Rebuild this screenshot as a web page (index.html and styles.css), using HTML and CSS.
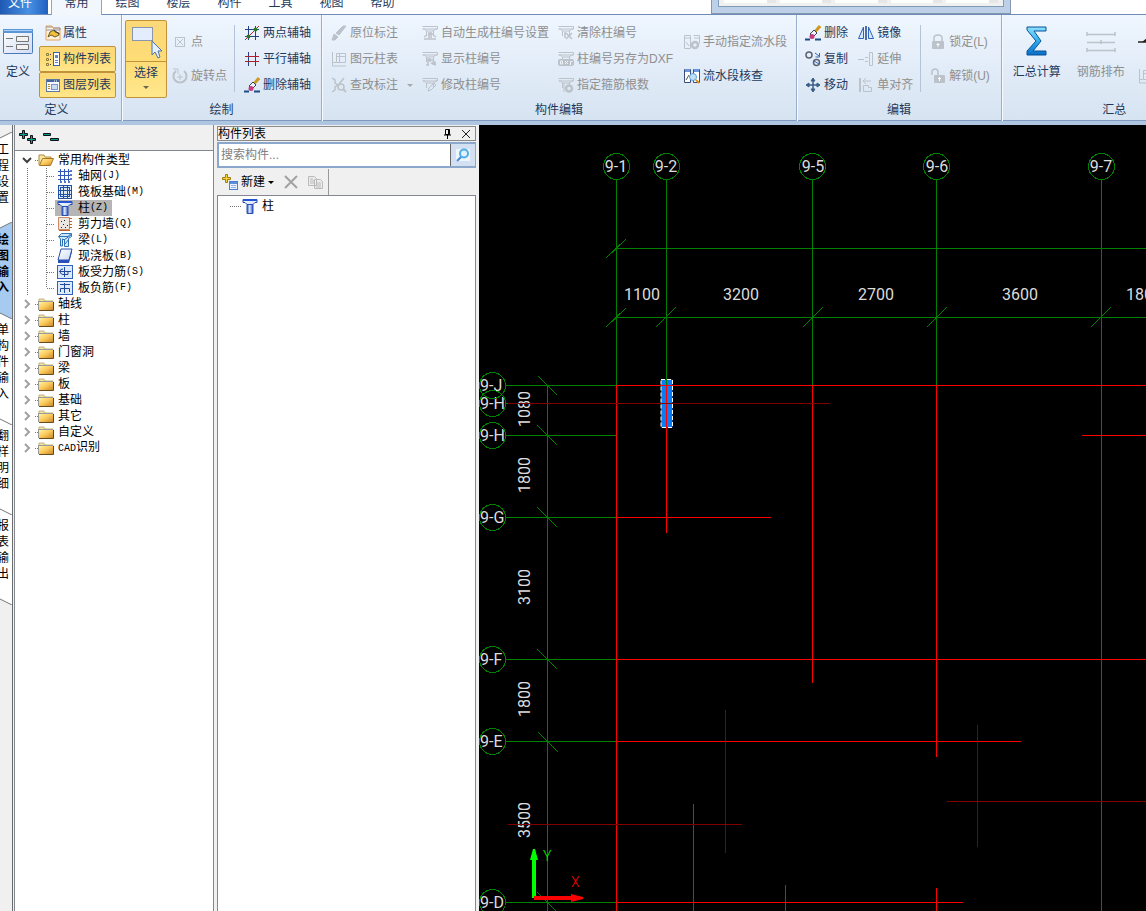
FILE: index.html
```html
<!DOCTYPE html>
<html lang="zh-CN">
<head>
<meta charset="utf-8">
<title>绘图输入</title>
<link rel="stylesheet" href="styles.css">
</head>
<body>
<svg class="sprite" aria-hidden="true">
  <defs>
    <linearGradient id="gold" x1="0" y1="0" x2="1" y2="1"><stop offset="0" stop-color="#fff6a8"/><stop offset=".5" stop-color="#fbc95c"/><stop offset="1" stop-color="#c98a2b"/></linearGradient>
    <linearGradient id="blue" x1="0" y1="0" x2="1" y2="0"><stop offset="0" stop-color="#2850c0"/><stop offset=".45" stop-color="#dcebff"/><stop offset="1" stop-color="#2850c0"/></linearGradient>
    <linearGradient id="sigma" x1="0" y1="0" x2="0" y2="1"><stop offset="0" stop-color="#8fe0fb"/><stop offset=".5" stop-color="#2fb0ee"/><stop offset="1" stop-color="#0a6cc4"/></linearGradient>
    <linearGradient id="pane" x1="0" y1="0" x2="1" y2="1"><stop offset="0" stop-color="#ffffff"/><stop offset="1" stop-color="#cfdcf4"/></linearGradient>
  </defs>
  <symbol id="folder" viewBox="0 0 16 14"><path d="M1 3V2h5l1 2h8v9H1z" fill="#efe3a0" stroke="#c8b478"/><path d="M1 4.500h14v8.500H1z" fill="url(#gold)"/><path d="M1 4.500h14M.5 4v9" stroke="#9a9a9a"/><path d="M15.500 5v8.500H1" fill="none" stroke="#6b4a17"/></symbol>
  <symbol id="folder-open" viewBox="0 0 16 14"><path d="M1 12V2h5l1 2h6v3" fill="#f4e9a0" stroke="#b08a3c"/><path d="M1.500 12.500l3-7h11l-3 7z" fill="url(#gold)" stroke="#a87424"/></symbol>
  <symbol id="props" viewBox="0 0 16 16"><path d="M1 4V1h6l1 2h7v12H1z" fill="#fdf0dc" stroke="#eba25c"/><path d="M1 2h6M8 3h7v2H1" fill="none" stroke="#8c97a8"/><path d="M3 12l2-5 4-2 1 2 4 1v2l-4 2-4-2z" fill="#f0c23c" stroke="#6b5824"/><path d="M9 5l5 4" stroke="#333"/></symbol>
  <symbol id="partlist" viewBox="0 0 16 16"><path d="M1.500 2.500h2v2h-2zM1.500 7.500h2v2h-2zM1.500 12.500h2v2h-2z" fill="none" stroke="#8b7a3a"/><path d="M5 3.500h2M5 8.500h2M5 13.500h2" stroke="#444" stroke-dasharray="1 1"/><rect x="8.500" y="1.500" width="6" height="13" fill="#fff" stroke="#3b62a8"/><path d="M10 4h3v3h-3z" fill="#5b86c8"/><path d="M10 9.500h3M10 11.500h3" stroke="#5b86c8"/></symbol>
  <symbol id="layers" viewBox="0 0 16 16"><rect x="1.500" y="2.500" width="13" height="12" fill="#f5f8ff" stroke="#5b7aa8"/><path d="M2 3h12v2H2z" fill="#44659c"/><path d="M9 4h1M11 4h1" stroke="#fff"/><path d="M3 7.500h2M3 9.500h2M3 11.500h2" stroke="#c08a1a"/><rect x="6.500" y="7.500" width="6" height="5" fill="#cfdcf4" stroke="#7d98c4"/></symbol>
  <symbol id="pt" viewBox="0 0 16 16"><rect x="3.500" y="3.500" width="9" height="9" fill="none" stroke="currentColor"/><path d="M5 5l6 6M11 5l-6 6" stroke="currentColor"/></symbol>
  <symbol id="rotpt" viewBox="0 0 16 16"><path d="M4 3a6.500 6.500 0 1 0 8 0" fill="none" stroke="currentColor" stroke-width="2"/><path d="M1 1h5v5M8 6v6M5 9h6" fill="none" stroke="currentColor"/></symbol>
  <symbol id="twopt" viewBox="0 0 16 16"><path d="M4.500 1v14M11.500 1v14M1 4.500h14M1 11.500h14" stroke="#27408b"/><path d="M1 15L15 1" stroke="#c8202c"/><circle cx="4.500" cy="11.500" r="2" fill="#2c7a20"/><circle cx="11.500" cy="4.500" r="2" fill="#2c7a20"/></symbol>
  <symbol id="parallel" viewBox="0 0 16 16"><path d="M4.500 1v14M11.500 1v14" stroke="#27408b"/><path d="M1 5.500h14M1 10.500h14" stroke="#b0202c"/></symbol>
  <symbol id="brush" viewBox="0 0 16 16"><path d="M15 1L9 8" stroke="#d09a20" stroke-width="3"/><path d="M9 5l3 3-4 4-3-3z" fill="#eef3ff" stroke="#345"/><circle cx="7" cy="11.500" r="2.500" fill="#c83c80"/><path d="M0 14.500h5M10 14.500h6" stroke="#1c4b85" stroke-width="2"/></symbol>
  <symbol id="feather" viewBox="0 0 16 16"><path d="M15 1l-7 9-3-2 7-7zM1 15l2-6 4 3-3 3z" fill="currentColor" stroke="currentColor"/></symbol>
  <symbol id="tbl" viewBox="0 0 16 16"><path d="M1.500 1v14H15M5.500 2.500h9v9h-9zM6 5.500h8M8.500 3v8M1 11.500h4" fill="none" stroke="currentColor"/></symbol>
  <symbol id="check" viewBox="0 0 16 16"><path d="M1 1l3 2v3l3 2-3 2v3l-3 2M13 1L8 7" fill="none" stroke="currentColor" stroke-width="1.500"/><circle cx="10" cy="10" r="3" fill="none" stroke="currentColor" stroke-width="1.500"/><path d="M12 12l3 3" stroke="currentColor" stroke-width="2"/></symbol>
  <symbol id="colbase" viewBox="0 0 16 16"><path d="M.5 1.500h15v2.500h-2l-2 2v4M.5 4h2l2 2v5M1 4h14M5 6h7" fill="none" stroke="currentColor"/></symbol>
  <symbol id="col1" viewBox="0 0 16 16"><use href="#colbase"/><path d="M7 7v6M9 7v6M6 9h5M2 14h12M2 12l3-2M14 12l-3-2" stroke="currentColor" stroke-width="1.500"/></symbol>
  <symbol id="col2" viewBox="0 0 16 16"><use href="#colbase"/><path d="M6 7v7M8 7v4M6 9h5M9 12l5 2M4 14h3" stroke="currentColor" stroke-width="1.500"/><circle cx="12" cy="12" r="2" fill="currentColor"/></symbol>
  <symbol id="col3" viewBox="0 0 16 16"><use href="#colbase"/><path d="M6 14l1-3 5-5 2 2-5 5z" fill="none" stroke="currentColor"/></symbol>
  <symbol id="colx" viewBox="0 0 16 16"><use href="#colbase"/><path d="M7 7v6M8 8l6 6M14 8l-6 6" stroke="currentColor" stroke-width="1.500"/></symbol>
  <symbol id="coldxf" viewBox="0 0 16 16"><use href="#colbase"/><rect x="0" y="8" width="16" height="7" rx="2" fill="currentColor"/><path d="M2.500 10h2v3h-2zM7 10l3 3M10 10l-3 3M12.500 14v-3.500h2" stroke="#eef3f9" fill="none"/></symbol>
  <symbol id="colgear" viewBox="0 0 16 16"><use href="#colbase"/><path d="M6 6v9" stroke="currentColor"/><circle cx="11" cy="11.500" r="3" fill="none" stroke="currentColor" stroke-width="2.500"/></symbol>
  <symbol id="flowgear" viewBox="0 0 16 16"><path d="M.5 1.500h6v13h-6zM9.500 1.500h6v8M1 4h5M10 4h5M2 8l3 4" fill="none" stroke="currentColor"/><circle cx="11" cy="11" r="3" fill="none" stroke="currentColor" stroke-width="2.500"/></symbol>
  <symbol id="flowcheck" viewBox="0 0 16 16"><path d="M.5 1.500h6v13h-6zM9.500 1.500h6v13h-6z" fill="#fff" stroke="#3b4f78"/><path d="M1 1h5v3H1zM10 1h5v3h-5z" fill="#6a96dc"/><path d="M2 12l3-5" stroke="#555"/><circle cx="9" cy="9" r="3.500" fill="#bfe2fa" stroke="#5aa0d8"/><path d="M12 12l3 3" stroke="#e08a20" stroke-width="2"/></symbol>
  <symbol id="copyobj" viewBox="0 0 16 16"><circle cx="4" cy="4" r="3" fill="none" stroke="#5a6270" stroke-width="1.500"/><circle cx="11.500" cy="11.500" r="3" fill="none" stroke="#5a6270" stroke-width="1.500"/><path d="M10 2l4 3M14.500 2v4h-4M9 10l5 3" stroke="#3b68a8" fill="none"/></symbol>
  <symbol id="move" viewBox="0 0 16 16"><path d="M8 2v12M2 8h12" stroke="#3b5d88" stroke-width="1.500"/><path d="M6 4l2-3 2 3zM6 12l2 3 2-3zM4 6L1 8l3 2zM12 6l3 2-3 2z" fill="#3b5d88" stroke="#3b5d88"/></symbol>
  <symbol id="mirror" viewBox="0 0 16 16"><path d="M5.500 2L.5 13.500h5zM10.500 2l5 11.500h-5z" fill="#d6eaff" stroke="#2c62b8"/><path d="M8 1v14" stroke="#1c3f90" stroke-width="1.500"/></symbol>
  <symbol id="extend" viewBox="0 0 16 16"><path d="M0 8.500h6M7 6.500h3M7 10.500h3M11.500 1.500h3v13h-3z" fill="none" stroke="currentColor"/></symbol>
  <symbol id="align" viewBox="0 0 16 16"><path d="M2 1v14" stroke="currentColor" stroke-width="2"/><path d="M5 4h8M8 1L5 4l3 3M5.500 8.500h5v2h3v4h-8z" fill="none" stroke="currentColor"/></symbol>
  <symbol id="lock" viewBox="0 0 16 16"><path d="M4 7V4q0-3 4-3t4 3v3" fill="none" stroke="currentColor" stroke-width="1.500"/><rect x="2" y="7" width="12" height="8" rx="1" fill="currentColor"/><path d="M8 9v4M6.500 10.500h3" stroke="#fff"/></symbol>
  <symbol id="unlock" viewBox="0 0 16 16"><path d="M2 7V4q0-3 3-3t3 3v3" fill="none" stroke="currentColor" stroke-width="1.500"/><rect x="4" y="7" width="11" height="8" rx="1" fill="currentColor"/><path d="M9.500 9v4M8 10.500h3" stroke="#fff"/></symbol>
  <symbol id="define" viewBox="0 0 32 28"><rect x="1.500" y="2.500" width="29" height="24" rx="1" fill="url(#pane)" stroke="#4a78b8"/><path d="M1 2h30v4H1z" fill="#5c96d4"/><path d="M2 3.500h28" stroke="#a8d0f4"/><path d="M4 11.500h7M4 19.500h7" stroke="#777"/><path d="M14.500 9.500h12v5h-12zM14.500 17.500h12v5h-12z" fill="#f2f2f2" stroke="#777"/></symbol>
  <symbol id="select" viewBox="0 0 32 32"><rect x="2.500" y="2.500" width="20" height="13" fill="#e3edfb" stroke="#22489c" stroke-dasharray="1 1"/><path d="M22 16v14l3-3 3 6 2-1-2-6h4z" fill="#e4f0ff" stroke="#4e72a4"/></symbol>
  <symbol id="sum" viewBox="0 0 24 32"><path d="M2 2h19v4H9l7 10-8 10h13v4H2v-4l9-10L2 5z" fill="url(#sigma)" stroke="#07539a"/></symbol>
  <symbol id="rebar" viewBox="0 0 30 26"><path d="M1 6.500h28M1 14.500h28M1 22.500h28M1 4v4M29 4v4M1 20v4M29 20v4M15 12v4" stroke="currentColor" stroke-width="1.500"/></symbol>
  <symbol id="cutbar" viewBox="0 0 30 14"><path d="M0 7h30" stroke="#26221a" stroke-width="1.500"/><path d="M4 7l5-4v4" fill="#26221a"/></symbol>
  <symbol id="grid" viewBox="0 0 16 16"><path d="M3.500 1v14M7.500 1v14M11.500 1v14M1 3.500h14M1 7.500h14M1 11.500h14" stroke="#2f58b8"/><path d="M13 2h2v2h-2zM13 6h2v2h-2zM13 10h2v2h-2zM3 13h2v2H3zM7 13h2v2H7zM11 13h2v2h-2z" fill="#5878c8"/></symbol>
  <symbol id="raft" viewBox="0 0 16 16"><rect x="1.500" y="1.500" width="13" height="13" fill="#dce9fa" stroke="#2450a0"/><path d="M3.500 3v10M12.500 3v10M3 3.500h10M3 12.500h10M6.500 2v12M10.500 2v12M2 6.500h12M2 10.500h12" stroke="#2450a0"/></symbol>
  <symbol id="column" viewBox="0 0 16 16"><path d="M1 1.500h14v3h-2l-2 2H5l-2-2H1z" fill="url(#pane)" stroke="#2448a8"/><path d="M1 2h14" stroke="#2455d0" stroke-width="2"/><path d="M5 6.500h6v9H5z" fill="url(#blue)" stroke="#2850b0"/></symbol>
  <symbol id="wall" viewBox="0 0 16 16"><path d="M1.500 1.500h11v12h-11z" fill="#e9e6e2" stroke="#c98a68"/><path d="M4 5.500h1M7 4.500h1M6 8.500h1M10 9.500h1M4 11.500h1M8 11.500h1" stroke="#222"/><path d="M12 2.500h3M12 5.500h3M12 8.500h3M12 11.500h3M2 14.500h11" stroke="#c2602c"/></symbol>
  <symbol id="beam" viewBox="0 0 16 16"><path d="M1.500 4.500l3-3h10v3l-3 2v8h-4V8l-2-1v7h-2V7z" fill="#cde8fb" stroke="#2f72b8"/><path d="M2 4.500h9l3-3M7 8l7-5M8 12l4-5" fill="none" stroke="#2f72b8"/></symbol>
  <symbol id="slab" viewBox="0 0 16 16"><path d="M4 1h11l-3 11H1z" fill="url(#pane)" stroke="#2850b0"/><path d="M1 12v3h11l3-11V1l-3 11H1z" fill="#2850b8"/></symbol>
  <symbol id="rebar-s" viewBox="0 0 16 16"><rect x=".5" y="1.500" width="15" height="13" fill="#dcebfb" stroke="#2f62b8"/><path d="M7.500 3v10M2 7.500h12M6 5q-3 0-3 2.500T6 10.500h5V7" fill="none" stroke="#2448a0"/></symbol>
  <symbol id="rebar-n" viewBox="0 0 16 16"><rect x=".5" y="1.500" width="15" height="13" fill="#dcebfb" stroke="#2f62b8"/><path d="M7.500 3v10M3.500 12V8.500h9V12M3 4.500h10" fill="none" stroke="#2448a0"/></symbol>
  <symbol id="new" viewBox="0 0 16 16"><path d="M3.500.5h2v3h3v2h-3v3h-2v-3h-3v-2h3z" fill="#f5d33c" stroke="#a07c10"/><rect x="7.500" y="7.500" width="8" height="8" fill="#e8f1ff" stroke="#4a80c8"/><path d="M8 8h7v2H8z" fill="#5b90d8"/><path d="M9 11.500h5M9 13.500h5" stroke="#8fb2e0"/></symbol>
  <symbol id="guide" viewBox="0 0 40 16"><path d="M12.500 0v16M31.500 0v16M32 8.500h8" stroke="#777" stroke-dasharray="1 1" fill="none"/></symbol>
  <symbol id="guide-end" viewBox="0 0 40 16"><path d="M12.500 0v16M31.500 0v8M32 8.500h8" stroke="#777" stroke-dasharray="1 1" fill="none"/></symbol>
  <symbol id="closed" viewBox="0 0 23 16"><path d="M10 4l4 4-4 4" stroke="#a0a0a0" stroke-width="2" fill="none"/><path d="M20 8.500h3" stroke="#777" stroke-dasharray="1 1"/></symbol>
  <symbol id="opened" viewBox="0 0 23 16"><path d="M8 6l4 4 4-4" stroke="#404040" stroke-width="2" fill="none"/><path d="M20 8.500h3" stroke="#777" stroke-dasharray="1 1"/></symbol>
</svg>

<div class="app">
  <header class="tabs">
    <button class="tab tab-file">文件</button>
    <nav class="tab-list">
      <button class="tab tab-on">常用</button>
      <button class="tab">绘图</button>
      <button class="tab">楼层</button>
      <button class="tab">构件</button>
      <button class="tab">工具</button>
      <button class="tab">视图</button>
      <button class="tab">帮助</button>
    </nav>
    <div class="floating"><div class="floating-body"><i></i><i></i><i></i><i></i><i></i></div></div>
  </header>

  <section class="ribbon">
    <div class="group g-define">
      <div class="group-body">
        <button class="big big-narrow"><span class="big-pic"><svg width="32" height="28"><use href="#define"/></svg></span>定义</button>
        <div class="col">
          <button class="tool boxed"><svg class="ic"><use href="#props"/></svg>属性</button>
          <button class="tool boxed on"><svg class="ic"><use href="#partlist"/></svg>构件列表</button>
          <button class="tool boxed on"><svg class="ic"><use href="#layers"/></svg>图层列表</button>
        </div>
      </div>
      <div class="group-name">定义</div>
    </div>

    <div class="group g-draw">
      <div class="group-body">
        <button class="big big-on"><span class="big-pic"><svg width="32" height="36"><use href="#select"/></svg></span>选择<span class="caret"></span></button>
        <div class="col mid off">
          <button class="tool"><svg class="ic"><use href="#pt"/></svg>点</button>
          <button class="tool"><svg class="ic"><use href="#rotpt"/></svg>旋转点</button>
        </div>
        <div class="rule"></div>
        <div class="col">
          <button class="tool"><svg class="ic"><use href="#twopt"/></svg>两点辅轴</button>
          <button class="tool"><svg class="ic"><use href="#parallel"/></svg>平行辅轴</button>
          <button class="tool"><svg class="ic"><use href="#brush"/></svg>删除辅轴</button>
        </div>
      </div>
      <div class="group-name">绘制</div>
    </div>

    <div class="group g-edit">
      <div class="group-body">
        <div class="col off">
          <button class="tool"><svg class="ic"><use href="#feather"/></svg>原位标注</button>
          <button class="tool"><svg class="ic"><use href="#tbl"/></svg>图元柱表</button>
          <button class="tool"><svg class="ic"><use href="#check"/></svg>查改标注<span class="caret caret-off"></span></button>
        </div>
        <div class="col off">
          <button class="tool"><svg class="ic"><use href="#col1"/></svg>自动生成柱编号设置</button>
          <button class="tool"><svg class="ic"><use href="#col2"/></svg>显示柱编号</button>
          <button class="tool"><svg class="ic"><use href="#col3"/></svg>修改柱编号</button>
        </div>
        <div class="col off">
          <button class="tool"><svg class="ic"><use href="#colx"/></svg>清除柱编号</button>
          <button class="tool"><svg class="ic"><use href="#coldxf"/></svg>柱编号另存为DXF</button>
          <button class="tool"><svg class="ic"><use href="#colgear"/></svg>指定箍筋根数</button>
        </div>
        <div class="col mid">
          <button class="tool off"><svg class="ic"><use href="#flowgear"/></svg>手动指定流水段</button>
          <button class="tool"><svg class="ic"><use href="#flowcheck"/></svg>流水段核查</button>
        </div>
      </div>
      <div class="group-name">构件编辑</div>
    </div>

    <div class="group g-modify">
      <div class="group-body">
        <div class="col">
          <button class="tool"><svg class="ic"><use href="#brush"/></svg>删除</button>
          <button class="tool"><svg class="ic"><use href="#copyobj"/></svg>复制</button>
          <button class="tool"><svg class="ic"><use href="#move"/></svg>移动</button>
        </div>
        <div class="col second">
          <button class="tool"><svg class="ic"><use href="#mirror"/></svg>镜像</button>
          <button class="tool off"><svg class="ic"><use href="#extend"/></svg>延伸</button>
          <button class="tool off"><svg class="ic"><use href="#align"/></svg>单对齐</button>
        </div>
        <div class="rule"></div>
        <div class="col mid off">
          <button class="tool"><svg class="ic"><use href="#lock"/></svg>锁定(L)</button>
          <button class="tool"><svg class="ic"><use href="#unlock"/></svg>解锁(U)</button>
        </div>
      </div>
      <div class="group-name">编辑</div>
    </div>

    <div class="group g-sum">
      <div class="group-body">
        <button class="big big-wide"><span class="big-pic"><svg width="24" height="32"><use href="#sum"/></svg></span>汇总计算</button>
        <button class="big big-wide off"><span class="big-pic"><svg width="30" height="26"><use href="#rebar"/></svg></span>钢筋排布</button>
        <div class="col mid cut">
          <button class="tool" aria-label="查看钢筋量"><svg width="30" height="14"><use href="#cutbar"/></svg></button>
          <button class="tool off" aria-label="编辑钢筋"><svg class="ic"><use href="#tbl"/></svg></button>
        </div>
      </div>
      <div class="group-name">汇总</div>
    </div>
  </section>

  <main class="work">
    <nav class="side">
      <button class="vtab"><svg width="12" height="7"><path d="M0 7V6L12 0V7z" fill="#fff"/><path d="M0 6L12 0" stroke="#777"/></svg><span>工程设置</span></button>
      <button class="vtab vtab-on"><svg width="12" height="7"><path d="M0 0H12L0 6z" fill="#fff"/><path d="M0 6L12 0" stroke="#777"/></svg><span>绘图输入</span></button>
      <button class="vtab"><svg width="12" height="7"><path d="M0 0H12V7L0 1z" fill="#a6caf0"/><path d="M0 1L12 7" stroke="#777"/></svg><span>单构件输入</span></button>
      <button class="vtab"><svg width="12" height="7"><path d="M0 1L12 7" stroke="#777"/></svg><span>翻样明细</span></button>
      <button class="vtab"><svg width="12" height="7"><path d="M0 1L12 7" stroke="#777"/></svg><span>报表输出</span></button>
      <svg width="12" height="7"><path d="M0 0H12V7L0 1z" fill="#fff"/><path d="M0 1L12 7" stroke="#777"/></svg>
    </nav>

    <aside class="types">
      <div class="types-bar">
        <button aria-label="全部展开"><svg width="18" height="16"><path d="M3.500 1.500h2v3h3v2h-3v3h-2v-3h-3v-2h3zM11.500 6.500h2v3h3v2h-3v3h-2v-3h-3v-2h3z" fill="#00a098" stroke="#111"/></svg></button>
        <button aria-label="全部折叠"><svg width="18" height="16"><path d="M1.500 4.500h7v2h-7zM8.500 9.500h8v2h-8z" fill="#00a098" stroke="#111"/></svg></button>
      </div>
      <ul class="tree">
        <li><button><svg class="tw"><use href="#opened"/></svg><svg class="fd"><use href="#folder-open"/></svg><span class="nm">常用构件类型</span></button>
          <ul>
            <li><button><svg class="gd"><use href="#guide"/></svg><span class="leaf"><svg class="ic"><use href="#grid"/></svg>轴网<kbd>(J)</kbd></span></button></li>
            <li><button><svg class="gd"><use href="#guide"/></svg><span class="leaf"><svg class="ic"><use href="#raft"/></svg>筏板基础<kbd>(M)</kbd></span></button></li>
            <li><button><svg class="gd"><use href="#guide"/></svg><span class="leaf picked"><svg class="ic"><use href="#column"/></svg>柱<kbd>(Z)</kbd></span></button></li>
            <li><button><svg class="gd"><use href="#guide"/></svg><span class="leaf"><svg class="ic"><use href="#wall"/></svg>剪力墙<kbd>(Q)</kbd></span></button></li>
            <li><button><svg class="gd"><use href="#guide"/></svg><span class="leaf"><svg class="ic"><use href="#beam"/></svg>梁<kbd>(L)</kbd></span></button></li>
            <li><button><svg class="gd"><use href="#guide"/></svg><span class="leaf"><svg class="ic"><use href="#slab"/></svg>现浇板<kbd>(B)</kbd></span></button></li>
            <li><button><svg class="gd"><use href="#guide"/></svg><span class="leaf"><svg class="ic"><use href="#rebar-s"/></svg>板受力筋<kbd>(S)</kbd></span></button></li>
            <li><button><svg class="gd"><use href="#guide-end"/></svg><span class="leaf"><svg class="ic"><use href="#rebar-n"/></svg>板负筋<kbd>(F)</kbd></span></button></li>
          </ul>
        </li>
        <li><button><svg class="tw"><use href="#closed"/></svg><svg class="fd"><use href="#folder"/></svg><span class="nm">轴线</span></button></li>
        <li><button><svg class="tw"><use href="#closed"/></svg><svg class="fd"><use href="#folder"/></svg><span class="nm">柱</span></button></li>
        <li><button><svg class="tw"><use href="#closed"/></svg><svg class="fd"><use href="#folder"/></svg><span class="nm">墙</span></button></li>
        <li><button><svg class="tw"><use href="#closed"/></svg><svg class="fd"><use href="#folder"/></svg><span class="nm">门窗洞</span></button></li>
        <li><button><svg class="tw"><use href="#closed"/></svg><svg class="fd"><use href="#folder"/></svg><span class="nm">梁</span></button></li>
        <li><button><svg class="tw"><use href="#closed"/></svg><svg class="fd"><use href="#folder"/></svg><span class="nm">板</span></button></li>
        <li><button><svg class="tw"><use href="#closed"/></svg><svg class="fd"><use href="#folder"/></svg><span class="nm">基础</span></button></li>
        <li><button><svg class="tw"><use href="#closed"/></svg><svg class="fd"><use href="#folder"/></svg><span class="nm">其它</span></button></li>
        <li><button><svg class="tw"><use href="#closed"/></svg><svg class="fd"><use href="#folder"/></svg><span class="nm">自定义</span></button></li>
        <li><button><svg class="tw"><use href="#closed"/></svg><svg class="fd"><use href="#folder"/></svg><span class="nm"><kbd>CAD</kbd>识别</span></button></li>
      </ul>
    </aside>

    <aside class="dock">
      <div class="dock-title"><span>构件列表</span>
        <button aria-label="固定"><svg width="10" height="10"><path d="M2.500.5h4v5h-4zM5.500 1v5M1 6h7M4.500 6v4" fill="none" stroke="#000"/></svg></button>
        <button aria-label="关闭"><svg width="10" height="10"><path d="M1 1l8 8M9 1L1 9" stroke="#222"/></svg></button>
      </div>
      <div class="search">
        <input type="text" placeholder="搜索构件..." aria-label="搜索构件">
        <button aria-label="搜索"><svg width="14" height="14"><path d="M0 1h14v12H0z" fill="#eef6fc"/><circle cx="8" cy="5.500" r="4" fill="#e2f3fe" stroke="#52aee8" stroke-width="2"/><path d="M5 9l-4 4" stroke="#3f8fd4" stroke-width="2"/></svg></button>
      </div>
      <div class="dock-bar">
        <button class="new"><svg class="ic"><use href="#new"/></svg>新建<span class="caret dark"></span></button>
        <button aria-label="删除"><svg width="14" height="14"><path d="M1 1l12 12M13 1L1 13" stroke="#a2a2a2" stroke-width="2"/></svg></button>
        <button aria-label="复制"><svg width="16" height="14"><path d="M.5 1.500h6l2 2v7h-8zM6.500 4.500h6l2 2v7h-8zM2 4h3M2 6h4M2 8h4M8 8h5M8 10h5M8 12h5" fill="#ececec" stroke="#bbb"/></svg></button>
      </div>
      <ul class="parts">
        <li><button><svg width="12" height="16"><path d="M0 8.500h12" stroke="#777" stroke-dasharray="1 1"/></svg><svg class="ic"><use href="#column"/></svg><span>柱</span></button></li>
      </ul>
    </aside>

    <section class="canvas">
      <svg class="drawing" role="img" aria-label="轴网图">
        <g transform="translate(-479 -125)">
          <g class="lbl" text-anchor="middle">
            <text x="616" y="172">9-1</text><text x="666" y="172">9-2</text><text x="813" y="172">9-5</text><text x="937" y="172">9-6</text><text x="1101" y="172">9-7</text>
            <text x="642" y="300">1100</text><text x="741" y="300">3200</text><text x="876" y="300">2700</text><text x="1020" y="300">3600</text><text x="1144" y="300">1800</text>
            <text transform="translate(530 409) rotate(-90)">1080</text>
            <text transform="translate(530 475) rotate(-90)">1800</text>
            <text transform="translate(530 587) rotate(-90)">3100</text>
            <text transform="translate(530 699) rotate(-90)">1800</text>
            <text transform="translate(530 820) rotate(-90)">3500</text>
          </g>
          <g class="lbl">
            <text x="480" y="391">9-J</text><text x="480" y="409">9-H</text><text x="480" y="441">9-H</text><text x="480" y="523">9-G</text><text x="480" y="665">9-F</text><text x="480" y="747">9-E</text><text x="480" y="908">9-D</text>
          </g>
          <path class="sel" d="M661 379.500h11.500v48H661z"/>
          <path class="green" d="M616.500 180V385M666.500 180V385M812.500 180V385M936.500 180V385M1101.500 180V385M616 248.500H2400M616 317.500H2400M547.500 385V1600M505 385.500H616M505 403.500H508M505 435.500H616M505 517.500H616M505 659.500H616M505 741.500H616M505 902.500H616"/>
          <path class="green" d="M606 258L626 239M606 327L626 308M656 327L676 307M803 327L823 307M927 327L947 307M1091 327L1111 307M538 376L557 395M537 425L557 445M537 507L557 527M537 649L557 669M538 732L558 752M537 892L557 912"/>
          <g class="green"><circle cx="616.500" cy="166.500" r="13"/><circle cx="666.500" cy="166.500" r="13"/><circle cx="812.500" cy="166.500" r="13"/><circle cx="936.500" cy="166.500" r="13"/><circle cx="1101.500" cy="166.500" r="13"/><circle cx="492.500" cy="385.500" r="13"/><circle cx="492.500" cy="403.500" r="13"/><circle cx="492.500" cy="435.500" r="13"/><circle cx="492.500" cy="517.500" r="13"/><circle cx="492.500" cy="659.500" r="13"/><circle cx="492.500" cy="741.500" r="13"/><circle cx="492.500" cy="902.500" r="13"/></g>
          <path class="red" d="M616.500 385V1600M666.500 385V533M812.500 385V683M936.500 385V757M936.500 888V1600M1101.500 385V1600M693.500 804V1600M785.500 885V1600M616 385.500H2400M1082 435.500H2400M616 517.500H771M616 659.500H2400M616 741.500H1021M616 902.500H963"/>
          <path class="maroon" d="M508 403.500H830M508 824.500H742M947 801.500H2400M725.500 710V853M977.500 725V847"/>
          <path d="M532 898V860h-2l3-11h2l3 11h-2v38z" fill="#00ff00"/>
          <path d="M534 896h37v-2l12 3v2l-12 3v-2h-37z" fill="#ff0000"/>
          <text class="axis" x="543" y="861" fill="#00ff00">Y</text>
          <text class="axis" x="571" y="887" fill="#ff0000">X</text>
        </g>
      </svg>
    </section>
  </main>
</div>
</body>
</html>
```
FILE: styles.css
```css
* { box-sizing: border-box; }
html, body { height: 100%; margin: 0; }
body { overflow: hidden; font: 12px/16px "Liberation Sans", "Noto Sans CJK SC", sans-serif; color: #000; background: #f0f0f0; }
button, input { font: inherit; color: inherit; margin: 0; }
button { padding: 0; border: 0; background: none; text-align: left; white-space: nowrap; }
ul { list-style: none; margin: 0; padding: 0; }
svg { display: block; flex: none; }
.sprite { position: absolute; width: 0; height: 0; }
.ic { width: 16px; height: 16px; }
.app { height: 100vh; display: flex; flex-direction: column; }

/* tab strip */
.tabs { position: relative; display: flex; gap: 3px; height: 14px; background: #fff; color: #1e395b; flex: none; }
.tab-list { display: flex; }
.tab { display: flex; align-items: flex-end; justify-content: center; width: 51px; height: 14px; padding-bottom: 3px; }
.tab-file { width: 48px; padding-right: 8px; color: #fff; background: linear-gradient(90deg, #1f58b4, #4791e4 60%, #1f5fc0); }
.tab-on { height: 15px; padding-bottom: 4px; background: #f2f7fd; border: solid #8ca5c8; border-width: 0 1px; z-index: 1; }
.floating { position: absolute; top: 0; right: 135px; width: 300px; height: 14px; padding: 0 6px 7px; background: #bdd0e8; border: solid #8596b0; border-width: 0 1px 1px; }
.floating-body { display: flex; gap: 4px; height: 7px; padding: 0 5px; background: #f0f0f0; border: solid #7f9db9; border-width: 0 1px 1px; overflow: hidden; }
.floating-body i { flex: 1; height: 3px; background: #fff; border-right: 9px solid #e6e6e6; }

/* ribbon */
.ribbon { display: flex; flex: none; height: 111px; overflow: hidden; color: #1e395b; border-top: 1px solid #6e8cb4; border-bottom: 4px solid #aec5e2; background: linear-gradient(#eff6fe, #e2ecf8 50%, #d6e3f1); box-shadow: inset 0 -1px #8099bc; }
.group { flex: none; padding-top: 5px; border-right: 1px solid #98aecb; box-shadow: 1px 0 #f7fbff; }
.group-body { display: flex; height: 78px; }
.group-name { padding-top: 1px; line-height: 22px; text-align: center; }
.col { display: flex; flex-direction: column; }
.mid { justify-content: center; gap: 8px; }
.tool { display: flex; align-items: center; gap: 3px; height: 26px; }
.off { color: #8f8f8f; }
.off svg { color: #bcc2c9; }
.boxed { gap: 2px; padding: 0 4px 0 5px; border: 1px solid transparent; border-radius: 2px; }
.on, .big-on { border: 1px solid #c2923a; border-radius: 2px; background: linear-gradient(#fbd878, #fedc76 50%, #ffe78c); }
.big { display: flex; flex-direction: column; align-items: center; line-height: 22px; }
.big-pic { display: flex; align-items: center; justify-content: center; height: 41px; width: 100%; }
.big-narrow { width: 36px; }
.big-wide { width: 64px; }
.big-on { width: 42px; }
.big-on .big-pic { border-bottom: 1px solid #c2923a; }
.caret { width: 0; height: 0; border: 3px solid transparent; border-top-color: #6b6553; border-bottom: 0; }
.big-on .caret { margin-top: 2px; }
.caret-off { margin-left: 6px; border-top-color: #a8a8a8; }
.dark { border-top-color: #000; }
.rule { width: 1px; margin: 5px 9px 6px 7px; background: #b4c3d8; }
.g-define .group-body { gap: 3px; padding-right: 5px; }
.g-define .group-name { padding-right: 8px; }
.g-draw .group-body { padding: 0 10px 0 3px; }
.g-draw .mid { margin-left: 5px; }
.g-edit .group-body { gap: 9px; padding: 0 9px; }
.g-edit .mid { margin-left: 2px; }
.g-modify .group-body { padding: 0 11px 0 8px; }
.second { margin-left: 10px; }
.g-sum { width: 226px; }
.g-sum .group-body { padding-left: 3px; }
.cut { padding-left: 5px; }

/* workspace */
.work { display: flex; flex: 1; min-height: 0; }
.side { width: 13px; flex: none; padding-top: 7px; overflow: hidden; border-right: 1px solid #6c6c6c; background: #f0f0f0; }
.vtab { display: block; width: 12px; padding-bottom: 16px; background: #fff; }
.vtab:first-child { background: linear-gradient(#f0f0f0 7px, #fff 7px); }
.vtab span { display: block; width: 13px; margin-left: -3px; padding-top: 3px; white-space: normal; word-break: break-all; line-height: 16px; }
.vtab-on { background: #a6caf0; font-weight: bold; }
.types { width: 200px; flex: none; margin-left: 1px; display: flex; flex-direction: column; border: solid #828790; border-width: 0 1px; }
.types-bar { display: flex; align-items: flex-start; gap: 5px; height: 25px; padding: 4px 0 0 4px; }
.tree { flex: 1; padding-top: 1px; background: #fff; border-top: 1px solid #828790; overflow: hidden; }
.tree button { display: flex; align-items: center; height: 16px; }
.tw { width: 23px; height: 16px; }
.fd { width: 16px; height: 14px; }
.gd { width: 40px; height: 16px; }
.nm { padding-left: 4px; }
.leaf { display: flex; align-items: center; height: 16px; padding: 0 4px 0 2px; }
.leaf .ic { margin-right: 5px; }
.picked { background: #b5b5b5; }
kbd { font: 10px/16px "Liberation Mono", monospace; }
.dock { width: 259px; flex: none; margin-left: 3px; display: flex; flex-direction: column; }
.dock-title { display: flex; align-items: center; gap: 8px; height: 15px; margin-top: 1px; padding-right: 4px; border: 1px solid #8a8a8a; }
.dock-title span { flex: 1; }
.search { display: flex; height: 26px; margin: 1px 0; border: 2px solid #8ba7cc; border-right-width: 1px; background: #d3e0f2; }
.search input { flex: 1; min-width: 0; padding: 0 2px; border: 0; border-right: 1px solid #666; border-radius: 0; background: #fff; }
.search input::placeholder { color: #808080; }
.search button { display: flex; align-items: center; justify-content: center; width: 24px; }
.dock-bar { display: flex; align-items: center; align-self: flex-start; gap: 10px; width: 112px; height: 26px; padding-left: 5px; border-right: 1px solid #999; }
.new { display: flex; align-items: center; gap: 3px; }
.parts { flex: 1; padding: 2px 0 0 12px; background: #fff; border: 1px solid #828790; border-bottom: 0; }
.parts button { display: flex; align-items: center; }
.parts span { padding-left: 4px; }
.canvas { flex: 1; min-width: 0; margin-left: 3px; background: #000; overflow: hidden; }
.drawing { width: 100%; height: 100%; }
.green, .red, .maroon { fill: none; stroke-width: 1; shape-rendering: crispEdges; }
.green { stroke: #008000; }
.red { stroke: #ff0000; }
.maroon { stroke: #800000; }
.sel { fill: #0a7cf5; stroke: #fff; stroke-dasharray: 4 2; }
.lbl { fill: #dcdcdc; font: 16px Roboto, sans-serif; }
.axis { font: 300 14px Roboto, sans-serif; }
```
